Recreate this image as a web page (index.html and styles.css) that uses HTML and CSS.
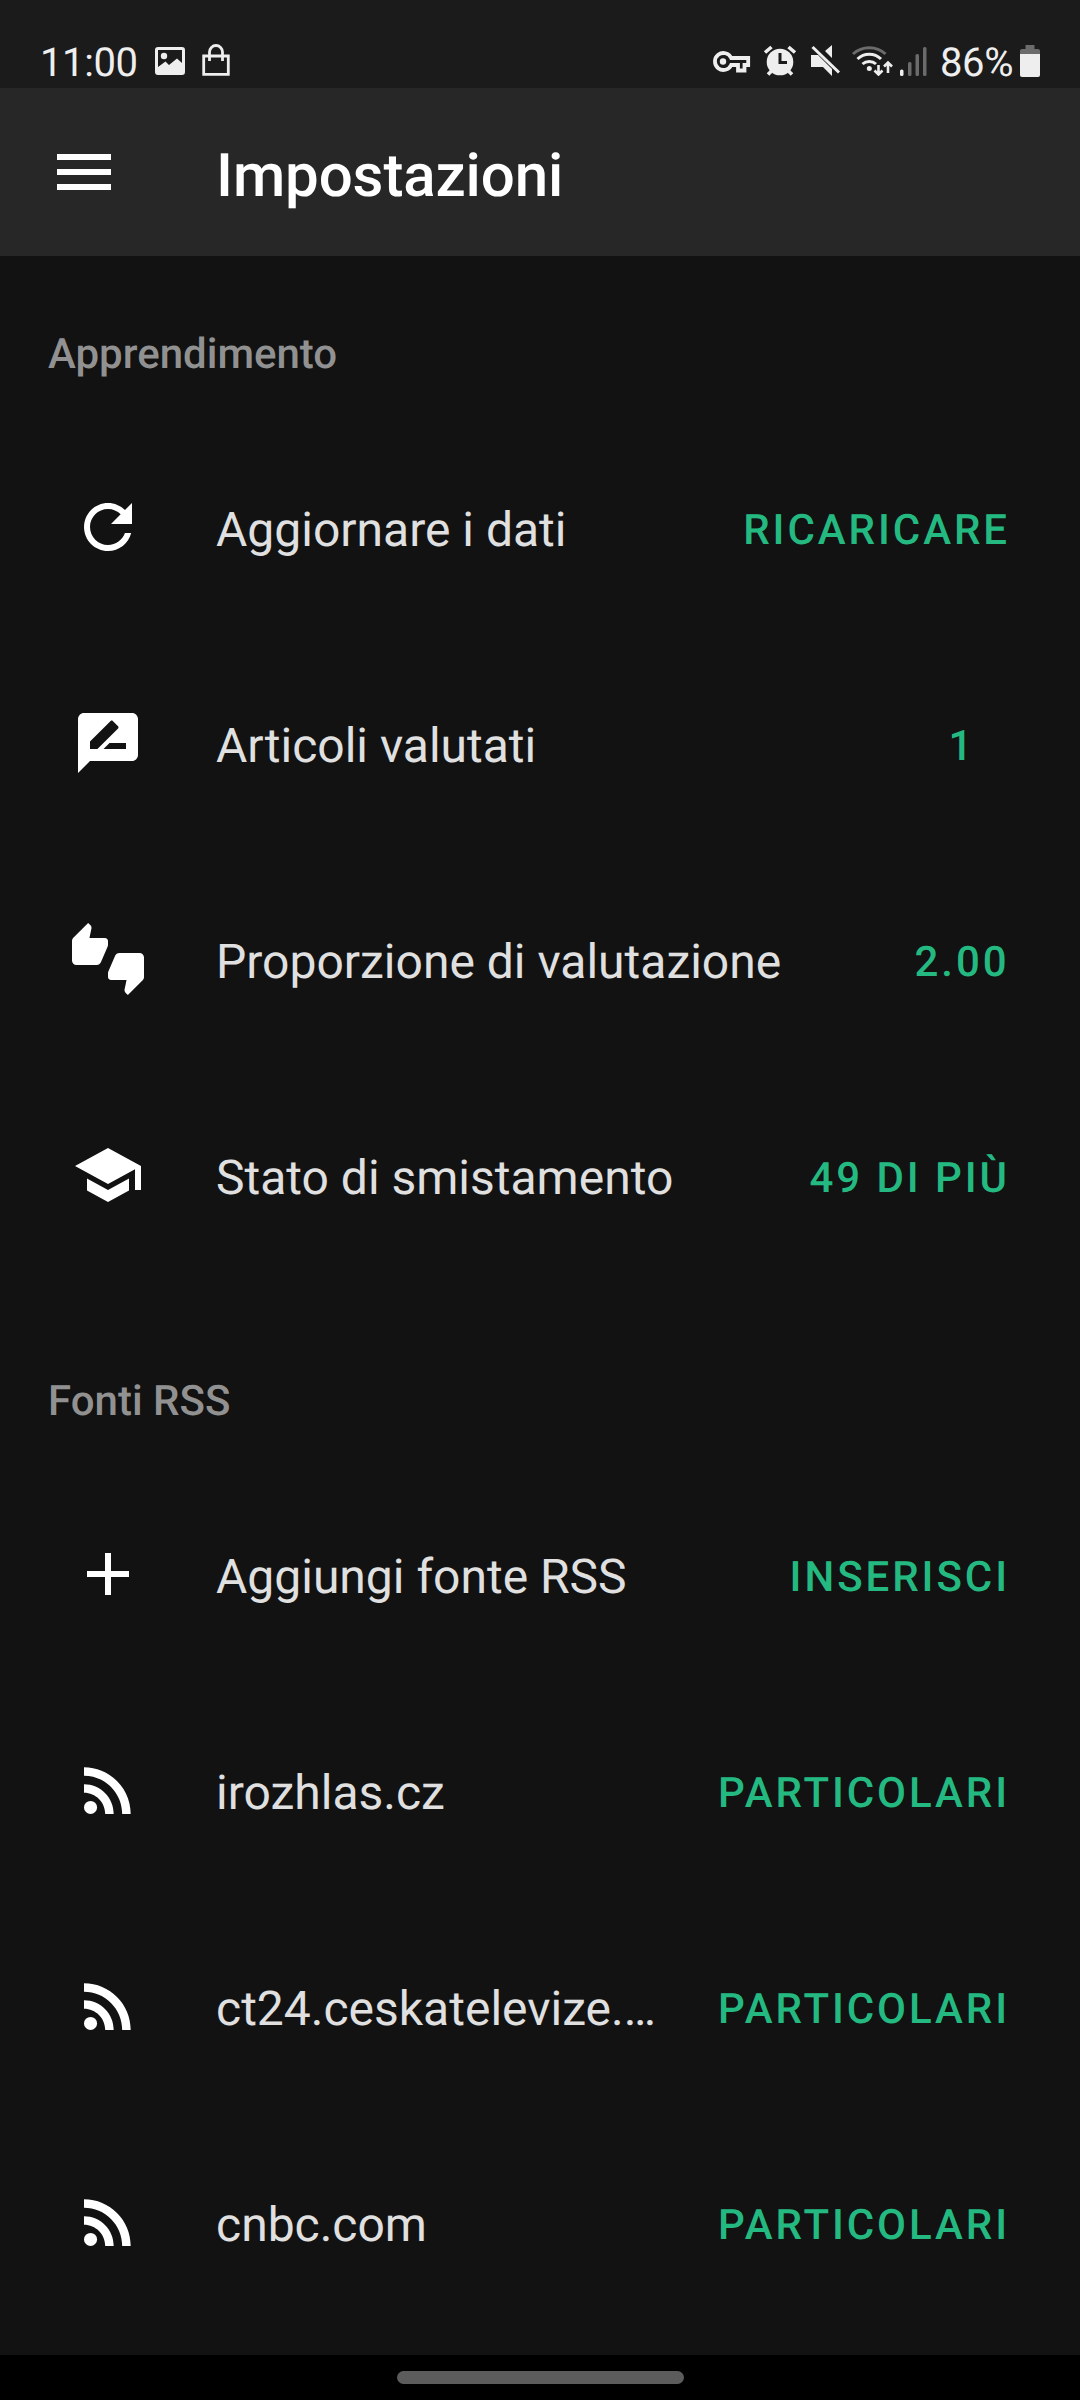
FILE: index.html
```html
<!DOCTYPE html>
<html lang="it">
<head>
<meta charset="utf-8">
<title>Impostazioni</title>
<link rel="stylesheet" href="styles.css">
</head>
<body>
<svg class="sprite" aria-hidden="true">
  <symbol id="rss" viewBox="0 0 24 24"><circle cx="6.18" cy="17.82" r="2.18"/><path d="M4 4.44v2.83c7.03 0 12.73 5.7 12.73 12.73h2.83c0-8.59-6.97-15.56-15.56-15.56zm0 5.66v2.83c3.9 0 7.07 3.17 7.07 7.07h2.83c0-5.47-4.43-9.9-9.9-9.9z"/></symbol>
</svg>
<div class="screen">
  <div class="status">
    <div class="status-group">
      <span class="clock">11:00</span>
      <svg class="st-image" width="30" height="28" viewBox="0 0 30 28"><path fill-rule="evenodd" d="M3 0h24a3 3 0 0 1 3 3v22a3 3 0 0 1-3 3H3a3 3 0 0 1-3-3V3a3 3 0 0 1 3-3zM3 3v17l7.500-5.500 3.500 3.500 8-6.500 5 4.500V3z"/><circle cx="9" cy="9" r="3.200"/></svg>
      <svg class="st-bag" width="28" height="32" viewBox="0 0 28 32"><path fill="none" stroke="#eee" stroke-width="2.800" d="M1.700 12h24.600v18.300H1.700zM7.500 17V8a6.500 6.500 0 0 1 13 0v9"/></svg>
    </div>
    <div class="status-group">
      <svg class="st-key" width="38" height="22" viewBox="0 0 38 22"><path fill="none" stroke="#eee" stroke-width="3.800" d="M18.200 7H35.200v7H31.500v5.500H25V14H18.200A8.500 8.500 0 1 1 18.200 7z"/><circle cx="10" cy="10.500" r="3.200"/></svg>
      <svg class="st-alarm" width="34" height="31" viewBox="0 0 34 31"><circle cx="17" cy="17" r="13.300"/><path stroke="#eee" stroke-width="3.600" d="M2 7.500l6.500-5.500M32 7.500L25.500 2M5 29.500l4-4M29 29.500l-4-4"/><path fill="none" stroke="#1b1b1b" stroke-width="3" d="M17 8v9.500h7"/></svg>
      <svg class="st-mute" width="30" height="31" viewBox="0 0 30 31"><path d="M0 10h7l14 14v7l-9-9H0zM14 6l7-6v13z"/><path stroke="#eee" stroke-width="3" d="M1.500 2L28 27.500"/></svg>
      <svg class="st-wifi" width="41" height="31" viewBox="0 0 41 31"><g fill="none" stroke-width="3"><path stroke="#6b6b6b" d="M1 9a24 24 0 0 1 32.500 0"/><path stroke="#eee" d="M5.500 14a17 17 0 0 1 23.500 0M10.500 19a10 10 0 0 1 13.500 0"/></g><circle cx="17.300" cy="23.500" r="2.500"/><path fill="none" stroke="#eee" stroke-width="2.600" d="M26.500 20v9M22.500 25.500l4 4 4-4M36 28V18M32 21.500l4-4 4 4"/></svg>
      <svg class="st-signal" width="27" height="29" viewBox="0 0 27 29"><rect y="22.500" width="3.500" height="6.500" rx="1.500"/><g fill="#6b6b6b"><rect x="8" y="15" width="3.500" height="14" rx="1.500"/><rect x="15.500" y="7" width="3.500" height="22" rx="1.500"/><rect x="23" width="3.500" height="29" rx="1.500"/></g></svg>
      <span class="percent">86%</span>
      <svg class="st-battery" width="20" height="32" viewBox="0 0 20 32"><path fill="#6b6b6b" d="M5.500 0h9v4H18a2 2 0 0 1 2 2v3H0V6a2 2 0 0 1 2-2h3.500z"/><path d="M0 9h20v21a2 2 0 0 1-2 2H2a2 2 0 0 1-2-2z"/></svg>
    </div>
  </div>
  <header class="appbar">
    <svg class="icon" viewBox="0 0 24 24"><path d="M3 18h18v-2H3v2zm0-5h18v-2H3v2zm0-7v2h18V6H3z"/></svg>
    <h1>Impostazioni</h1>
  </header>
  <main>
    <section>
      <h2>Apprendimento</h2>
      <div class="row">
        <svg class="icon" viewBox="0 0 24 24"><path d="M17.650 6.350C16.200 4.900 14.210 4 12 4c-4.420 0-7.990 3.580-7.990 8s3.570 8 7.990 8c3.730 0 6.840-2.550 7.730-6h-2.080c-.82 2.330-3.040 4-5.650 4-3.310 0-6-2.690-6-6s2.690-6 6-6c1.660 0 3.140.69 4.220 1.780L13 11h7V4l-2.350 2.350z"/></svg>
        <span class="label">Aggiornare i dati</span><span class="action">RICARICARE</span>
      </div>
      <div class="row">
        <svg class="icon" viewBox="0 0 24 24"><path d="M20 2H4c-1.100 0-1.990.9-1.990 2L2 22l4-4h14c1.100 0 2-.9 2-2V4c0-1.100-.9-2-2-2zM6 14v-2.470l6.880-6.880c.2-.2.510-.2.710 0l1.770 1.770c.2.2.2.510 0 .71L8.470 14H6zm12 0h-7.500l2-2H18v2z"/></svg>
        <span class="label">Articoli valutati</span><span class="action">1</span>
      </div>
      <div class="row">
        <svg class="icon" viewBox="0 0 24 24"><path d="M12 6c0-.55-.45-1-1-1H5.820l.66-3.180.02-.23c0-.31-.13-.59-.33-.8L5.380 0 .44 4.940C.17 5.210 0 5.590 0 6v6.500c0 .83.67 1.500 1.500 1.500h6.750c.62 0 1.150-.38 1.380-.91l2.260-5.290c.07-.17.110-.36.110-.55V6zm10.500 4h-6.750c-.62 0-1.150.38-1.380.91l-2.260 5.290c-.07.17-.11.36-.11.55V18c0 .55.45 1 1 1h5.180l-.66 3.180-.02.24c0 .31.13.59.33.8l.79.78 4.940-4.940c.27-.27.44-.65.44-1.060v-6.500c0-.83-.67-1.500-1.500-1.500z"/></svg>
        <span class="label">Proporzione di valutazione</span><span class="action">2.00</span>
      </div>
      <div class="row">
        <svg class="icon" viewBox="0 0 24 24"><path d="M5 13.180v4L12 21l7-3.820v-4L12 17l-7-3.820zM12 3L1 9l11 6 9-4.910V17h2V9L12 3z"/></svg>
        <span class="label">Stato di smistamento</span><span class="action">49 DI PIÙ</span>
      </div>
    </section>
    <section>
      <h2>Fonti RSS</h2>
      <div class="row">
        <svg class="icon" viewBox="0 0 24 24"><path d="M19 13h-6v6h-2v-6H5v-2h6V5h2v6h6v2z"/></svg>
        <span class="label">Aggiungi fonte RSS</span><span class="action">INSERISCI</span>
      </div>
      <div class="row">
        <svg class="icon"><use href="#rss"/></svg>
        <span class="label">irozhlas.cz</span><span class="action">PARTICOLARI</span>
      </div>
      <div class="row">
        <svg class="icon"><use href="#rss"/></svg>
        <span class="label">ct24.ceskatelevize.…</span><span class="action">PARTICOLARI</span>
      </div>
      <div class="row">
        <svg class="icon"><use href="#rss"/></svg>
        <span class="label">cnbc.com</span><span class="action">PARTICOLARI</span>
      </div>
    </section>
  </main>
  <footer class="navbar"><div class="pill"></div></footer>
</div>
</body>
</html>
```
FILE: styles.css
```css
* { box-sizing: border-box; }
body { margin: 0; background: #121212; font-family: Roboto, sans-serif; text-rendering: geometricPrecision; }
.sprite { display: none; }
.screen { width: 1080px; height: 2400px; display: flex; flex-direction: column; overflow: hidden; }
svg { display: block; flex: none; fill: #eee; }

.status { height: 88px; flex: none; background: #1b1b1b; display: flex; justify-content: space-between; align-items: flex-start; padding: 0 40px; color: #eee; }
.status-group { display: flex; align-items: flex-start; }
.clock, .percent { font-size: 40px; line-height: 48px; margin-top: 39px; letter-spacing: -0.4px; }
.clock { width: 115px; }
.st-image { margin: 47px 0 0; }
.st-bag { margin: 44px 0 0 17px; }
.st-key { margin: 51px 0 0; }
.st-alarm { margin: 45px 0 0 12px; }
.st-mute { margin: 45px 0 0 14px; }
.st-wifi { margin: 45px 0 0 11px; }
.st-signal { margin: 47px 0 0 7px; }
.percent { width: 75px; margin-left: 13px; }
.st-battery { margin: 45px 0 0 5px; }

.appbar { height: 168px; flex: none; background: #272727; display: flex; align-items: center; gap: 96px; padding-left: 48px; }
.icon { width: 72px; height: 72px; fill: #fff; }
h1 { margin: 7px 0 0; font-size: 60px; line-height: 72px; font-weight: 500; letter-spacing: -0.1px; color: #fff; }

main { flex: 1; min-height: 0; }
section + section { margin-top: 20px; }
h2 { margin: 0; height: 163px; padding: 74px 48px 0; font-size: 42px; line-height: 49px; font-weight: 500; color: #919191; }
.row { height: 216px; display: flex; align-items: center; padding: 0 46px 0 72px; }
.label { flex: 1; min-width: 0; margin: 5px 0 0 72px; font-size: 48px; line-height: 56px; white-space: nowrap; color: #e0e0e0; }
.action { min-width: 144px; padding: 0 24px; margin-top: 7px; font-size: 42px; line-height: 49px; font-weight: 500; letter-spacing: 2.94px; text-align: center; color: #24b981; }

.navbar { height: 45px; flex: none; background: #000; display: flex; justify-content: center; padding-top: 16px; }
.pill { width: 287px; height: 13px; border-radius: 7px; background: #5c5c5c; }
```
